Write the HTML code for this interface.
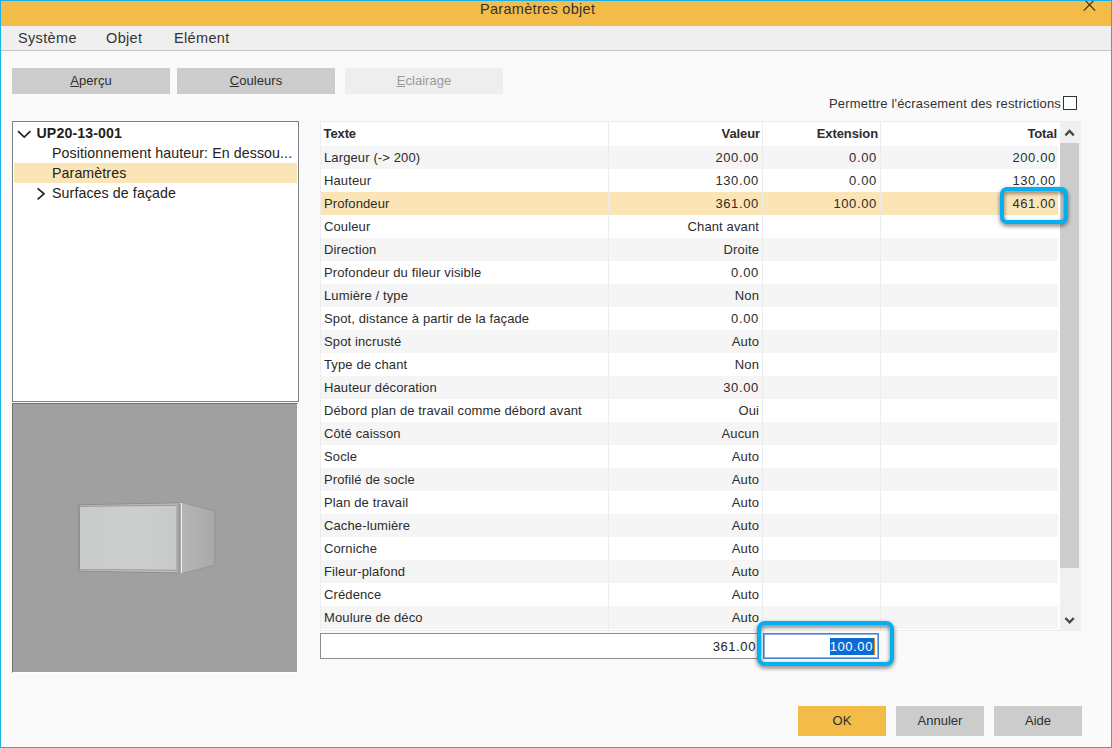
<!DOCTYPE html>
<html lang="fr">
<head>
<meta charset="utf-8">
<title>Paramètres objet</title>
<style>
html,body{margin:0;padding:0;}
body{width:1112px;height:748px;overflow:hidden;background:#fafafa;font-family:"Liberation Sans",sans-serif;color:#222;}
#win{position:absolute;left:0;top:0;width:1110px;height:746px;border:1px solid #19b1ea;background:#fafafa;overflow:hidden;}
.abs{position:absolute;}
#title{left:0;top:0;width:1110px;height:25px;background:#f3bb47;}
#title span{position:absolute;left:479px;top:-2px;font-size:14.5px;letter-spacing:0.3px;line-height:20px;color:#333;white-space:nowrap;}
#menu{left:0;top:25px;width:1110px;height:24px;background:#efefef;border-bottom:1px solid #c6c6c6;}
#menu span{position:absolute;top:3px;font-size:14.5px;letter-spacing:0.35px;line-height:18px;color:#333;white-space:nowrap;}
.btn{position:absolute;background:#cccccc;text-align:center;font-size:13px;letter-spacing:0.05px;color:#2e2e2e;white-space:nowrap;}
.btn.top{top:67px;width:158px;height:26px;line-height:26px;}
.btn.dis{background:#eeeeee;color:#9a9a9a;}
.btn u{text-decoration-thickness:1px;text-underline-offset:1px;}
.btn.bot{top:705px;width:88px;height:30px;line-height:30px;font-size:13px;letter-spacing:0;color:#2e2e2e;}
#tree{left:11px;top:120px;width:285px;height:279px;border:1px solid #7a7f89;background:#fff;}
#tree .row{position:absolute;left:1px;width:283px;height:20px;line-height:20px;font-size:14.2px;letter-spacing:0.1px;white-space:nowrap;color:#222;}
#tree .sel{background:#fbe5b6;}
#prev{left:11px;top:402px;width:284px;height:268px;background:#a0a0a0;border-left:1px solid #6f6f6f;border-top:1px solid #6f6f6f;border-right:1px solid #fff;border-bottom:1px solid #fff;}
#chk{left:1062px;top:95px;width:12px;height:12px;border:1px solid #333;background:#fff;}
#chklbl{left:828px;top:94px;font-size:13px;letter-spacing:0.18px;line-height:18px;white-space:nowrap;color:#333;}
#tbl{left:319px;top:120px;width:739px;height:508px;border-left:1px solid #ededed;border-top:1px solid #ededed;border-bottom:1px solid #ededed;background:#fff;}
.tr{position:absolute;left:0;width:737px;height:23px;line-height:23px;font-size:13px;letter-spacing:0.12px;color:#2c2c2c;white-space:nowrap;}
.tr.g{background:#f5f5f5;}
.tr.h{background:#fbe5b6;}
.tr.hd{height:24px;line-height:24px;font-weight:bold;top:0;letter-spacing:-0.1px;}
.tr.hd span{margin-right:-1px;}
.tr.hd .c1{margin-left:-0.5px}
.tr span{position:absolute;top:0;}
.c1{left:3px;}
.c2{right:299px;}
.n{letter-spacing:0.6px;margin-right:0.2px;}
.c3{right:181px;}
.c4{right:2px;}
.vl{position:absolute;top:0;width:1px;height:508px;background:#ececec;}
</style>
</head>
<body>
<div id="win">
<div id="title" class="abs"><span>Paramètres objet</span>
<svg class="abs" style="left:1080px;top:0" width="18" height="12" viewBox="0 0 18 12"><path d="M2.8 -2 L14.2 9.6 M14.2 -2 L2.8 9.6" stroke="#2a2a2a" stroke-width="1.1" fill="none"/></svg>
</div>
<div id="menu" class="abs"><span style="left:17px">Système</span><span style="left:105px">Objet</span><span style="left:173px">Elément</span></div>

<div class="btn top" style="left:11px"><u>A</u>perçu</div>
<div class="btn top" style="left:176px"><u>C</u>ouleurs</div>
<div class="btn top dis" style="left:344px"><u>E</u>clairage</div>

<div id="chklbl" class="abs">Permettre l'écrasement des restrictions</div>
<div id="chk" class="abs"></div>

<div id="tree" class="abs">
<div class="row" style="top:1px"><svg class="abs" style="left:3px;top:4px" width="16" height="12" viewBox="0 0 16 12"><path d="M1 4.2 L7.2 10 L13.4 4.2" stroke="#222" stroke-width="1.7" fill="none"/></svg><b style="position:absolute;left:22.5px">UP20-13-001</b></div>
<div class="row" style="top:21px"><span style="position:absolute;left:38px">Positionnement hauteur: En dessou...</span></div>
<div class="row sel" style="top:41px"><span style="position:absolute;left:38px">Paramètres</span></div>
<div class="row" style="top:61px"><svg class="abs" style="left:22px;top:3px" width="12" height="16" viewBox="0 0 12 16"><path d="M1.6 2.3 L8 7.8 L1.6 13.3" stroke="#222" stroke-width="1.7" fill="none"/></svg><span style="position:absolute;left:38px">Surfaces de façade</span></div>
</div>

<div id="prev" class="abs">
<svg class="abs" style="left:0;top:0" width="284" height="268" viewBox="13 404 284 268">
<defs>
<linearGradient id="gs" x1="0" y1="0" x2="1" y2="0"><stop offset="0" stop-color="#b5b5b5"/><stop offset="1" stop-color="#a9a9a9"/></linearGradient>
<linearGradient id="gt" x1="0" y1="0" x2="1" y2="0"><stop offset="0" stop-color="#b6b6b6"/><stop offset="1" stop-color="#8c8c8c"/></linearGradient>
<linearGradient id="gf" x1="0" y1="0" x2="1" y2="0"><stop offset="0" stop-color="#c9cbca"/><stop offset="0.6" stop-color="#cdcfce"/><stop offset="1" stop-color="#c8cac9"/></linearGradient>
</defs>
<polygon points="182.4,502.6 214.8,511.2 214.8,565 182.4,573.3" fill="url(#gs)" stroke="#8a8a8a" stroke-width="0.6"/>
<polygon points="78,504.3 182,502.4 182,573.4 78,571.6" fill="#8d8d8d"/>
<polygon points="79.2,505.2 181,503.3 181,572.5 79.2,570.7" fill="#b9b9b9"/>
<polygon points="79.2,506 176.8,505 176.8,570.6 79.2,569.6" fill="#8f8f8f"/>
<polygon points="80,506.8 176.3,505.8 176.3,569.8 80,569" fill="url(#gf)"/>
<rect x="176.3" y="504.2" width="4.5" height="67.8" fill="url(#gt)"/>
<rect x="180.8" y="503" width="1.5" height="70.2" fill="#f2f2f2"/>
</svg>
</div>

<div id="tbl" class="abs">
<div class="tr hd"><span class="c1">Texte</span><span class="c2">Valeur</span><span class="c3">Extension</span><span class="c4">Total</span></div>
<div class="tr g" style="top:24px"><span class="c1">Largeur (-&gt; 200)</span><span class="c2 n">200.00</span><span class="c3 n">0.00</span><span class="c4 n">200.00</span></div>
<div class="tr" style="top:47px"><span class="c1">Hauteur</span><span class="c2 n">130.00</span><span class="c3 n">0.00</span><span class="c4 n">130.00</span></div>
<div class="tr h" style="top:70px"><span class="c1">Profondeur</span><span class="c2 n">361.00</span><span class="c3 n">100.00</span><span class="c4 n">461.00</span></div>
<div class="tr" style="top:93px"><span class="c1">Couleur</span><span class="c2">Chant avant</span></div>
<div class="tr g" style="top:116px"><span class="c1">Direction</span><span class="c2">Droite</span></div>
<div class="tr" style="top:139px"><span class="c1">Profondeur du fileur visible</span><span class="c2 n">0.00</span></div>
<div class="tr g" style="top:162px"><span class="c1">Lumière / type</span><span class="c2">Non</span></div>
<div class="tr" style="top:185px"><span class="c1">Spot, distance à partir de la façade</span><span class="c2 n">0.00</span></div>
<div class="tr g" style="top:208px"><span class="c1">Spot incrusté</span><span class="c2">Auto</span></div>
<div class="tr" style="top:231px"><span class="c1">Type de chant</span><span class="c2">Non</span></div>
<div class="tr g" style="top:254px"><span class="c1">Hauteur décoration</span><span class="c2 n">30.00</span></div>
<div class="tr" style="top:277px"><span class="c1">Débord plan de travail comme débord avant</span><span class="c2">Oui</span></div>
<div class="tr g" style="top:300px"><span class="c1">Côté caisson</span><span class="c2">Aucun</span></div>
<div class="tr" style="top:323px"><span class="c1">Socle</span><span class="c2">Auto</span></div>
<div class="tr g" style="top:346px"><span class="c1">Profilé de socle</span><span class="c2">Auto</span></div>
<div class="tr" style="top:369px"><span class="c1">Plan de travail</span><span class="c2">Auto</span></div>
<div class="tr g" style="top:392px"><span class="c1">Cache-lumière</span><span class="c2">Auto</span></div>
<div class="tr" style="top:415px"><span class="c1">Corniche</span><span class="c2">Auto</span></div>
<div class="tr g" style="top:438px"><span class="c1">Fileur-plafond</span><span class="c2">Auto</span></div>
<div class="tr" style="top:461px"><span class="c1">Crédence</span><span class="c2">Auto</span></div>
<div class="tr g" style="top:484px"><span class="c1">Moulure de déco</span><span class="c2">Auto</span></div>
<div class="vl" style="left:287px"></div>
<div class="vl" style="left:441px"></div>
<div class="vl" style="left:559px"></div>
</div>

<!-- scrollbar -->
<div class="abs" style="left:1059px;top:120px;width:21px;height:510px;background:#f0f0f0"></div>
<div class="abs" style="left:1059px;top:142px;width:19px;height:425px;background:#cdcdcd"></div>
<svg class="abs" style="left:1062px;top:125px" width="14" height="12" viewBox="0 0 14 12"><path d="M2.4 9.3 L6.6 5 L10.8 9.3" stroke="#484848" stroke-width="2.4" fill="none"/></svg>
<svg class="abs" style="left:1062px;top:612px" width="14" height="12" viewBox="0 0 14 12"><path d="M2.4 5 L6.6 9.3 L10.8 5" stroke="#484848" stroke-width="2.4" fill="none"/></svg>

<!-- inputs -->
<div class="abs" style="left:319px;top:632px;width:439px;height:24px;border:1px solid #8c8c8c;background:#fff;font-size:13px;letter-spacing:0.6px;line-height:24px;"><span style="position:absolute;right:4px;top:1px">361.00</span></div>
<div class="abs" style="left:762px;top:632px;width:114px;height:24px;border:1px solid #4580d8;box-shadow:inset 0 0 0 1px #8db1e8;background:#fff;font-size:13px;letter-spacing:0.6px;line-height:24px;"><span style="position:absolute;right:3px;top:4px;height:17px;line-height:17px;background:#0a6bd6;color:#fff;padding:0 1px 0 0;border-right:1px solid #e08a1a">100.00</span></div>

<!-- annotation boxes -->
<div class="abs" style="left:998.6px;top:185.8px;width:60px;height:29px;border:4px solid #00b0f0;border-radius:7px;filter:drop-shadow(0.5px 2px 2.2px rgba(0,0,0,.55));"></div>
<div class="abs" style="left:756.3px;top:620px;width:129px;height:37px;border:4px solid #00b0f0;border-radius:8px;filter:drop-shadow(0.5px 2px 2.2px rgba(0,0,0,.55));"></div>

<div class="btn bot" style="left:797px;background:#f3bb47">OK</div>
<div class="btn bot" style="left:895px">Annuler</div>
<div class="btn bot" style="left:993px">Aide</div>
</div>
</body>
</html>
